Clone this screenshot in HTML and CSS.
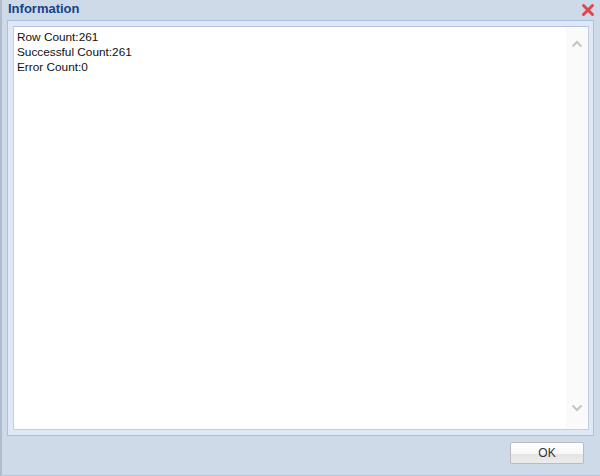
FILE: index.html
```html
<!DOCTYPE html>
<html>
<head>
<meta charset="utf-8">
<link rel="stylesheet" href="styles.css">
</head>
<body>
<div class="window">
  <div class="header">
    <span class="title">Information</span>
    <svg class="close" width="14" height="14" viewBox="0 0 14 14">
      <path d="M2.5 2.5 L11.5 11.5 M11.5 2.5 L2.5 11.5" stroke="#e0474c" stroke-width="3" stroke-linecap="round"/>
    </svg>
  </div>
  <div class="frame">
    <div class="textbox">
      <div class="content">
        <div>Row Count:261</div>
        <div>Successful Count:261</div>
        <div>Error Count:0</div>
      </div>
      <div class="scroll">
        <svg width="12" height="8" viewBox="0 0 12 8"><path d="M1.5 6.5 L6 2 L10.5 6.5" fill="none" stroke="#c4c4c4" stroke-width="2"/></svg>
        <svg width="12" height="8" viewBox="0 0 12 8"><path d="M1.5 1.5 L6 6 L10.5 1.5" fill="none" stroke="#c4c4c4" stroke-width="2"/></svg>
      </div>
    </div>
  </div>
  <div class="footer">
    <button class="btn">OK</button>
  </div>
</div>
</body>
</html>
```
FILE: styles.css
```css
html, body {
  margin: 0;
  padding: 0;
}
body {
  width: 600px;
  height: 476px;
  overflow: hidden;
  font-family: "Liberation Sans", Arial, sans-serif;
}
.window {
  box-sizing: border-box;
  width: 600px;
  height: 476px;
  background: #cfdae8;
  border-left: 2px solid #aebccd;
  border-bottom: 1px solid #b9c7d8;
  display: flex;
  flex-direction: column;
}
.header {
  display: flex;
  align-items: center;
  justify-content: space-between;
  padding: 0 5px 2px 6px;
  box-sizing: border-box;
  height: 22px;
  margin-top: -2px;
}
.title {
  font-weight: bold;
  font-size: 13px;
  color: #15428b;
}
.close {
  display: block;
  margin-top: 4px;
}
.frame {
  margin: 0 6px 0 5px;
  height: 416px;
  box-sizing: border-box;
  border: 1px solid #a9c1e3;
  background: #dfe8f6;
  padding: 5px 4px 5px 5px;
  display: flex;
}
.textbox {
  flex: 1;
  background: #fff;
  border: 1px solid #c3cfdf;
  border-top-color: #b5c3d6;
  display: flex;
}
.content {
  flex: 1;
  padding: 3px 3px;
  font-size: 11.8px;
  line-height: 15px;
  color: #111;
}
.scroll {
  width: 22px;
  background: #fafafa;
  display: flex;
  flex-direction: column;
  justify-content: space-between;
  align-items: center;
  padding: 13px 0 17px;
}
.scroll svg {
  display: block;
}
.footer {
  flex: 1;
  display: flex;
  justify-content: flex-end;
  align-items: flex-start;
  padding: 6px 16px 0 0;
}
.btn {
  width: 74px;
  height: 22px;
  border: 1px solid #b8bcc2;
  border-radius: 2px;
  background: linear-gradient(#ffffff 0%, #f7f7f7 55%, #e4e4e4 56%, #ececec 100%);
  font-family: "Liberation Sans", Arial, sans-serif;
  font-size: 12px;
  color: #333;
  padding: 0;
}
```
